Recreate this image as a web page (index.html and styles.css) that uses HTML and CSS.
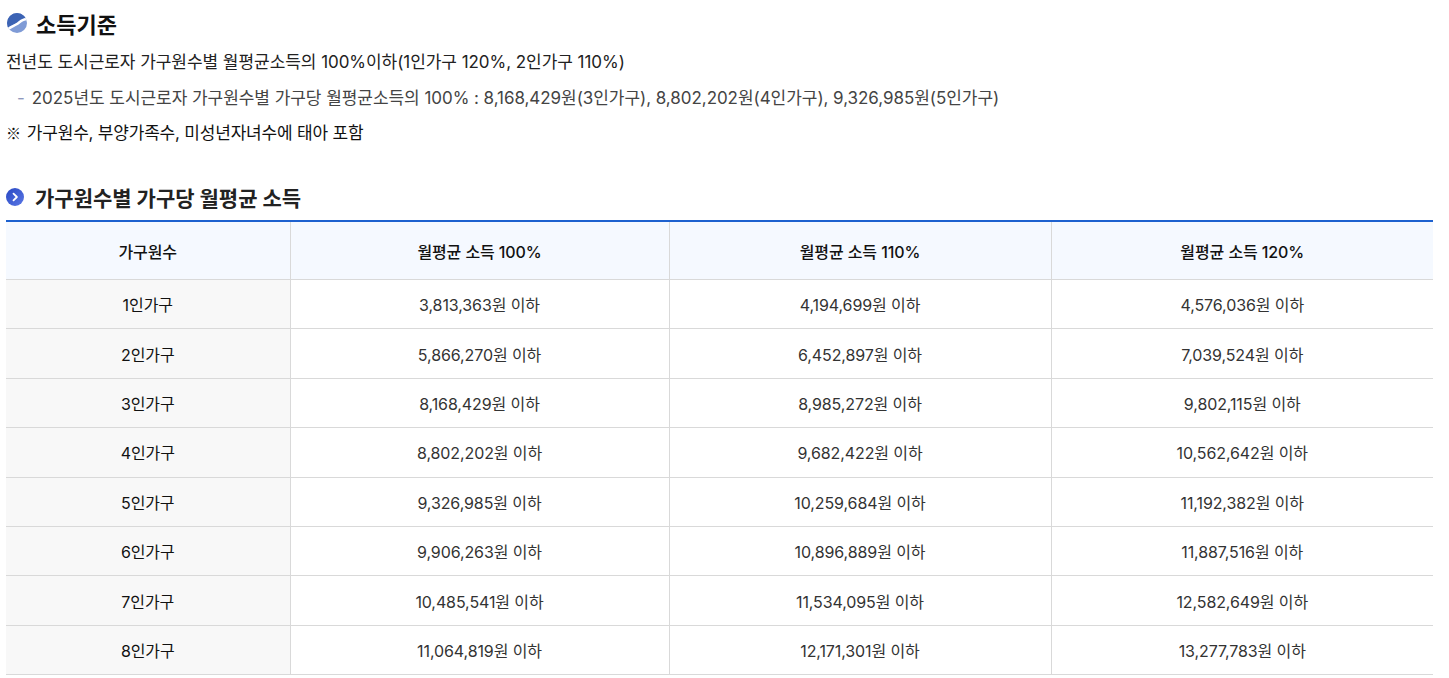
FILE: index.html
```html
<!DOCTYPE html>
<html lang="ko">
<head>
<meta charset="utf-8">
<title>소득기준</title>
<link rel="stylesheet" href="styles.css">
</head>
<body>
<div class="page">
  <h2 class="title">
    <svg class="ico-swirl" width="20" height="20" viewBox="0 0 20 20" aria-hidden="true">
      <defs>
        <clipPath id="cc"><circle cx="10" cy="10" r="10"/></clipPath>
      </defs>
      <g clip-path="url(#cc)">
        <rect x="0" y="0" width="20" height="20" fill="#7f9bd6"/>
        <path d="M0 0 H20 V5 C16 5 13.5 8 10 10 C7 11.8 3.5 12 0 16 Z" fill="#3c63b4"/>
        <path d="M0 17 C3.5 13.5 7 13 10 11 C13 9 15.5 6 20 6" fill="none" stroke="#fff" stroke-width="2.6"/>
      </g>
    </svg>
    <span>소득기준</span>
  </h2>
  <p class="line">전년도 도시근로자 가구원수별 월평균소득의 100%이하(1인가구 120%, 2인가구 110%)</p>
  <p class="line sub"><span class="dash">-</span>2025년도 도시근로자 가구원수별 가구당 월평균소득의 100% : 8,168,429원(3인가구), 8,802,202원(4인가구), 9,326,985원(5인가구)</p>
  <p class="line note"><span class="mark">※</span>가구원수, 부양가족수, 미성년자녀수에 태아 포함</p>

  <h3 class="subtitle">
    <svg class="ico-chev" width="18" height="18" viewBox="0 0 18 18" aria-hidden="true">
      <defs>
        <linearGradient id="bg" x1="0" y1="0" x2="1" y2="1">
          <stop offset="0" stop-color="#2747c2"/>
          <stop offset="1" stop-color="#5b78e6"/>
        </linearGradient>
      </defs>
      <circle cx="9" cy="9" r="9" fill="url(#bg)"/>
      <path d="M7.5 5.6 L10.9 9 L7.5 12.4" fill="none" stroke="#fff" stroke-width="1.8" stroke-linecap="round" stroke-linejoin="round"/>
    </svg>
    <span>가구원수별 가구당 월평균 소득</span>
  </h3>

  <table class="tbl">
    <colgroup>
      <col class="c1"><col class="c2"><col class="c3"><col class="c4">
    </colgroup>
    <thead>
      <tr><th>가구원수</th><th>월평균 소득 100%</th><th>월평균 소득 110%</th><th>월평균 소득 120%</th></tr>
    </thead>
    <tbody>
      <tr><th>1인가구</th><td>3,813,363원 이하</td><td>4,194,699원 이하</td><td>4,576,036원 이하</td></tr>
      <tr><th>2인가구</th><td>5,866,270원 이하</td><td>6,452,897원 이하</td><td>7,039,524원 이하</td></tr>
      <tr><th>3인가구</th><td>8,168,429원 이하</td><td>8,985,272원 이하</td><td>9,802,115원 이하</td></tr>
      <tr><th>4인가구</th><td>8,802,202원 이하</td><td>9,682,422원 이하</td><td>10,562,642원 이하</td></tr>
      <tr><th>5인가구</th><td>9,326,985원 이하</td><td>10,259,684원 이하</td><td>11,192,382원 이하</td></tr>
      <tr><th>6인가구</th><td>9,906,263원 이하</td><td>10,896,889원 이하</td><td>11,887,516원 이하</td></tr>
      <tr><th>7인가구</th><td>10,485,541원 이하</td><td>11,534,095원 이하</td><td>12,582,649원 이하</td></tr>
      <tr><th>8인가구</th><td>11,064,819원 이하</td><td>12,171,301원 이하</td><td>13,277,783원 이하</td></tr>
    </tbody>
  </table>
</div>
</body>
</html>
```

FILE: styles.css
```css
html, body {
  margin: 0;
  padding: 0;
  background: #fff;
}
body {
  font-family: Inter, "Noto Sans CJK KR", sans-serif;
  color: #222;
}
.page {
  padding: 0 16px 0 6px;
}
.title {
  display: flex;
  align-items: center;
  gap: 9px;
  margin: 0;
  padding-top: 11px;
  height: 24px;
  font-size: 22px;
  font-weight: 700;
  color: #111;
}
.ico-swirl { margin-left: 1px; flex: none; }
.line {
  margin: 0;
  font-size: 17px;
  line-height: 24px;
  letter-spacing: -0.05px;
  color: #222;
}
.title + .line { margin-top: 15px; }
.sub {
  margin-top: 12px;
  padding-left: 11px;
  color: #444;
  letter-spacing: -0.05px;
}
.dash {
  color: #8f98bd;
  margin-right: 7px;
}
.note {
  margin-top: 11px;
  color: #111;
  letter-spacing: -0.2px;
}
.mark {
  font-family: "Noto Sans CJK KR", sans-serif;
  font-size: 15px;
  margin-right: 6px;
}
.subtitle {
  display: flex;
  align-items: center;
  gap: 11px;
  margin: 40px 0 0;
  height: 24px;
  font-size: 21px;
  font-weight: 700;
  color: #222;
}
.ico-chev { flex: none; }
.tbl {
  margin-top: 11px;
  width: 1427px;
  border-collapse: collapse;
  table-layout: fixed;
  border-top: 2px solid #1d61cf;
  font-size: 16px;
  letter-spacing: -0.1px;
}
.c1 { width: 284px; }
.c2 { width: 379px; }
.c3 { width: 382px; }
.c4 { width: 382px; }
.tbl th, .tbl td {
  border: 1px solid #d9d9d9;
  border-top: none;
  text-align: center;
  font-weight: 400;
  color: #222;
  padding: 0;
}
.tbl tr > :first-child { border-left: none; }
.tbl tr > :last-child { border-right: none; }
.tbl thead th {
  height: 57px;
  background: #f5f9ff;
  font-weight: 500;
  color: #111;
}
.tbl tbody tr { height: 49.4px; }
.tbl tbody th {
  background: #f8f8f8;
  color: #111;
}
.tbl tbody td { color: #333; }
```
